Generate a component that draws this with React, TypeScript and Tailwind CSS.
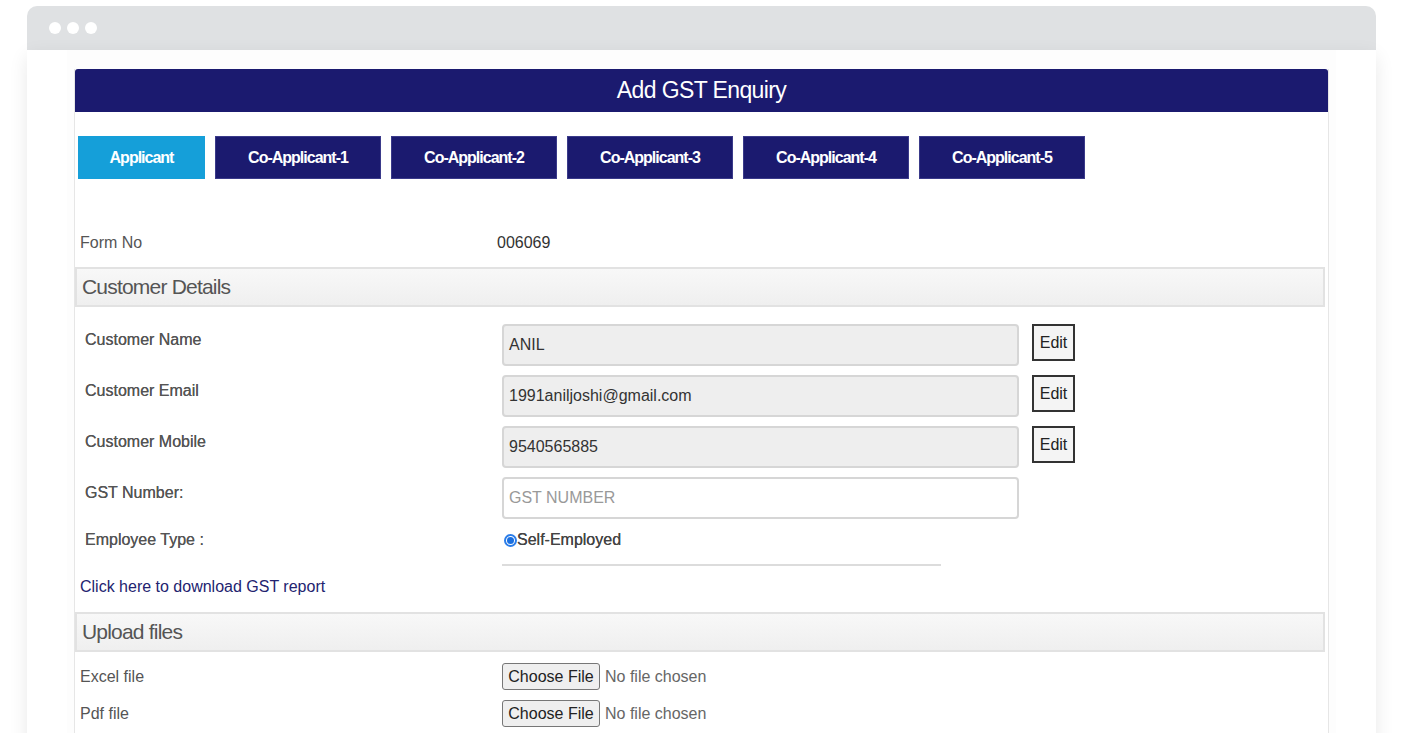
import React from "react";

const tabs = ["Applicant", "Co-Applicant-1", "Co-Applicant-2", "Co-Applicant-3", "Co-Applicant-4", "Co-Applicant-5"];

function SectionHeader({ title }: { title: string }) {
  return (
    <div className="h-[40px] mr-[3px] flex items-center px-[5px] border-2 border-[#e2e2e2] bg-gradient-to-b from-[#f8f8f8] to-[#efefef] text-[21px] tracking-[-0.8px] text-[#555]">
      {title}
    </div>
  );
}

function FieldRow({ label, value, edit, placeholder }: { label: string; value?: string; edit?: boolean; placeholder?: string }) {
  return (
    <div className="flex items-start">
      <div className="w-[427px] pl-[10px] pt-[4px] text-[16px] text-[#555] [text-shadow:0_0_0.4px_#555]">{label}</div>
      <div
        className={`w-[517px] h-[42px] rounded-[4px] border-2 border-[#d6d6d6] flex items-center px-[5px] text-[16px] ${
          value ? "bg-[#eeeeee] text-[#333]" : "bg-white text-[#999]"
        }`}
      >
        {value ?? placeholder}
      </div>
      {edit && (
        <button className="ml-[13px] w-[43px] h-[37px] border-2 border-[#333] bg-[#f4f4f4] text-[16px] text-[#222] flex items-start justify-center pt-[5px]">
          Edit
        </button>
      )}
    </div>
  );
}

function FileRow({ label }: { label: string }) {
  return (
    <div className="flex items-center h-[27px]">
      <div className="w-[427px] pl-[5px] text-[16px] text-[#555]">{label}</div>
      <button className="h-[27px] w-[98px] rounded-[3px] border border-[#777] bg-[#efefef] text-[16px] text-[#222]">
        Choose File
      </button>
      <span className="ml-[5px] text-[16px] text-[#666]">No file chosen</span>
    </div>
  );
}

export default function App() {
  return (
    <div className="w-[1403px] h-[733px] overflow-hidden bg-white pt-[6px] px-[27px] font-['Liberation_Sans',Arial,sans-serif]">
      <div className="h-[44px] rounded-t-[10px] bg-[#dfe1e3] flex items-center gap-[6px] pl-[22px]">
        <span className="w-[12px] h-[12px] rounded-full bg-white" />
        <span className="w-[12px] h-[12px] rounded-full bg-white" />
        <span className="w-[12px] h-[12px] rounded-full bg-white" />
      </div>
      <div className="h-[700px] bg-white shadow-[0_6px_18px_rgba(0,0,0,0.09)] px-[40px]">
        <div className="h-full bg-[#fdfdfd] px-[7px] pt-[19px]">
          <div className="h-full border-x border-[#e6e6e6] bg-white">
            <div className="h-[43px] rounded-t-[3px] bg-[#1b1a6f] flex items-center justify-center text-white text-[23px] tracking-[-0.6px]">
              Add GST Enquiry
            </div>

            <div className="flex gap-[10px] pl-[3px] mt-[24px]">
              {tabs.map((t, i) => (
                <div
                  key={t}
                  className={`h-[43px] flex items-center justify-center text-white font-bold text-[16px] tracking-[-1px] ${
                    i === 0 ? "w-[127px] bg-[#159fd9]" : "w-[166px] bg-[#1b1a6f] border border-[#3a3a8a]"
                  }`}
                >
                  {t}
                </div>
              ))}
            </div>

            <div className="flex items-center h-[22px] mt-[53px] text-[16px]">
              <div className="w-[422px] pl-[5px] text-[#555]">Form No</div>
              <div className="text-[#333]">006069</div>
            </div>

            <div className="mt-[13px]">
              <SectionHeader title="Customer Details" />
            </div>

            <div className="flex flex-col gap-[9px] mt-[17px]">
              <FieldRow label="Customer Name" value="ANIL" edit />
              <FieldRow label="Customer Email" value="1991aniljoshi@gmail.com" edit />
              <FieldRow label="Customer Mobile" value="9540565885" edit />
              <FieldRow label="GST Number:" placeholder="GST NUMBER" />
            </div>

            <div className="flex items-start mt-[11px]">
              <div className="w-[427px] pl-[10px] h-[20px] leading-[20px] text-[16px] text-[#555] [text-shadow:0_0_0.4px_#555]">
                Employee Type :
              </div>
              <div className="w-[439px]">
                <div className="flex items-center h-[20px] pl-[2px] text-[16px] text-[#444] [text-shadow:0_0_0.3px_#444]">
                  <span className="w-[13px] h-[13px] rounded-full border-2 border-[#2b7de9] bg-white flex items-center justify-center">
                    <span className="w-[7px] h-[7px] rounded-full bg-[#1a6fe0]" />
                  </span>
                  <span>Self-Employed</span>
                </div>
                <div className="mt-[14px] h-[2px] bg-[#dcdcdc]" />
              </div>
            </div>

            <div className="mt-[9px] pl-[5px] text-[16px] text-[#23236f]">Click here to download GST report</div>

            <div className="mt-[13px]">
              <SectionHeader title="Upload files" />
            </div>

            <div className="flex flex-col gap-[10px] mt-[11px]">
              <FileRow label="Excel file" />
              <FileRow label="Pdf file" />
            </div>
          </div>
        </div>
      </div>
    </div>
  );
}
